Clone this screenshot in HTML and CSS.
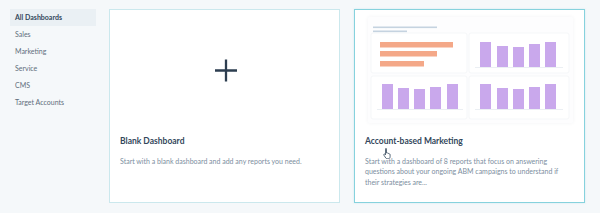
FILE: index.html
```html
<!DOCTYPE html>
<html>
<head>
<meta charset="utf-8">
<link rel="stylesheet" href="styles.css">
</head>
<body>
<div class="layout">
  <nav class="sidebar">
    <div class="nav-item active">All Dashboards</div>
    <div class="nav-item">Sales</div>
    <div class="nav-item">Marketing</div>
    <div class="nav-item">Service</div>
    <div class="nav-item">CMS</div>
    <div class="nav-item">Target Accounts</div>
  </nav>
  <main class="cards">
    <section class="card">
      <div class="preview blank">
        <svg class="plus" width="22" height="23" viewBox="0 0 22 23"><path d="M11 0.5V22.5M0 11.5H22" stroke="#2d3e50" stroke-width="2.3" fill="none"/></svg>
      </div>
      <h2 class="card-title">Blank Dashboard</h2>
      <p class="card-desc">Start with a blank dashboard and add any reports you need.</p>
    </section>
    <section class="card hover">
      <div class="preview shot">
        <svg width="205" height="106" viewBox="0 0 205 106">
          <rect x="3" y="16" width="96" height="40" rx="2" fill="#ffffff" stroke="#f5f7f9"/>
          <rect x="101" y="16" width="100" height="40" rx="2" fill="#ffffff" stroke="#f5f7f9"/>
          <rect x="3" y="59" width="96" height="43" rx="2" fill="#ffffff" stroke="#f5f7f9"/>
          <rect x="101" y="59" width="100" height="43" rx="2" fill="#ffffff" stroke="#f5f7f9"/>
          <rect x="5" y="9.5" width="64" height="1.6" fill="#c5d3e0"/>
          <rect x="5" y="13.5" width="34" height="1.6" fill="#c5d3e0"/>
          <rect x="12" y="25" width="73" height="5.5" fill="#f4a888"/>
          <rect x="12" y="34" width="57" height="5.5" fill="#f4a888"/>
          <rect x="12" y="44" width="44" height="5.5" fill="#f4a888"/>
          <g fill="#c9a8ec">
            <rect x="112" y="25" width="11" height="25"/>
            <rect x="129" y="29" width="11" height="21"/>
            <rect x="145" y="30" width="11" height="20"/>
            <rect x="161" y="27" width="11" height="23"/>
            <rect x="177" y="25" width="11" height="25"/>
            <rect x="14" y="67" width="11" height="25"/>
            <rect x="30" y="71" width="11" height="21"/>
            <rect x="46" y="72" width="11" height="20"/>
            <rect x="62" y="70" width="11" height="22"/>
            <rect x="79" y="67" width="11" height="25"/>
            <rect x="112" y="67" width="11" height="25"/>
            <rect x="129" y="71" width="11" height="21"/>
            <rect x="145" y="72" width="11" height="20"/>
            <rect x="161" y="70" width="11" height="22"/>
            <rect x="177" y="67" width="11" height="25"/>
          </g>
          <g fill="#e6ebf0">
            <rect x="107" y="50" width="88" height="0.8"/>
            <rect x="9" y="92" width="86" height="0.8"/>
            <rect x="107" y="92" width="88" height="0.8"/>
          </g>
        </svg>
      </div>
      <h2 class="card-title">Account-based Marketing</h2>
      <p class="card-desc">Start with a dashboard of 8 reports that focus on answering questions about your ongoing ABM campaigns to understand if their strategies are...</p>
      <svg class="cursor" width="9" height="11" viewBox="0 0 9 11"><path d="M2.5 0.8c0.6 0 1 0.4 1 1v3.2l0.6-0.2c0.5 0 0.8 0.3 0.9 0.6c0.5-0.2 1 0 1.1 0.5c0.5-0.1 1 0.2 1 0.7v2.2c0 1.2-0.9 2-2 2H4.2c-0.6 0-1.1-0.3-1.4-0.8L0.9 7.2c-0.3-0.4-0.2-0.9 0.2-1.1c0.4-0.2 0.8-0.1 1 0.2l0.4 0.6V1.8c0-0.6 0.4-1 1-1z" fill="#ffffff" stroke="#33475b" stroke-width="0.8"/></svg>
    </section>
  </main>
</div>
</body>
</html>
```

FILE: styles.css
```css
html, body {
  margin: 0;
  padding: 0;
}
body {
  background: #f5f8fa;
  font-family: "Lato", "Liberation Sans", sans-serif;
  color: #33475b;
  width: 600px;
  height: 213px;
  overflow: hidden;
}
.layout {
  display: flex;
  padding: 9px 0 0 10px;
}
.sidebar {
  width: 86px;
  flex: none;
}
.nav-item {
  height: 17px;
  line-height: 17px;
  padding-left: 5px;
  font-size: 7px;
  color: #5f6e7c;
  white-space: nowrap;
}
.nav-item.active {
  background: #eaf0f4;
  color: #33475b;
  font-weight: 700;
}
.cards {
  margin-left: 13px;
  display: grid;
  grid-template-columns: 231px 231px;
  column-gap: 14px;
}
.card {
  position: relative;
  box-sizing: border-box;
  height: 194px;
  background: #ffffff;
  border: 1px solid #cbe8ed;
  padding: 7px 10px 0 10px;
}
.card.hover {
  border-color: #86d2dd;
  box-shadow: 0 0 2px rgba(0, 164, 189, 0.15);
}
.preview {
  margin: 0 3px;
  width: 205px;
  height: 106px;
  box-sizing: border-box;
}
.preview.blank {
  display: flex;
  align-items: center;
  justify-content: center;
}
.preview.blank .plus {
  margin-top: 1px;
}
.preview.shot {
  background: #fdfdfe;
  box-shadow: 0 0 4px rgba(45, 62, 80, 0.06);
  border-radius: 2px;
}
.preview.shot svg {
  display: block;
}
.card-title {
  margin: 13px 0 0 0;
  font-size: 8.5px;
  line-height: 11px;
  font-weight: 700;
  color: #33475b;
}
.card-desc {
  margin: 9px 0 0 0;
  font-size: 7px;
  line-height: 10.4px;
  color: #7c8ea0;
}
.cursor {
  position: absolute;
  left: 28px;
  top: 138px;
}
```
